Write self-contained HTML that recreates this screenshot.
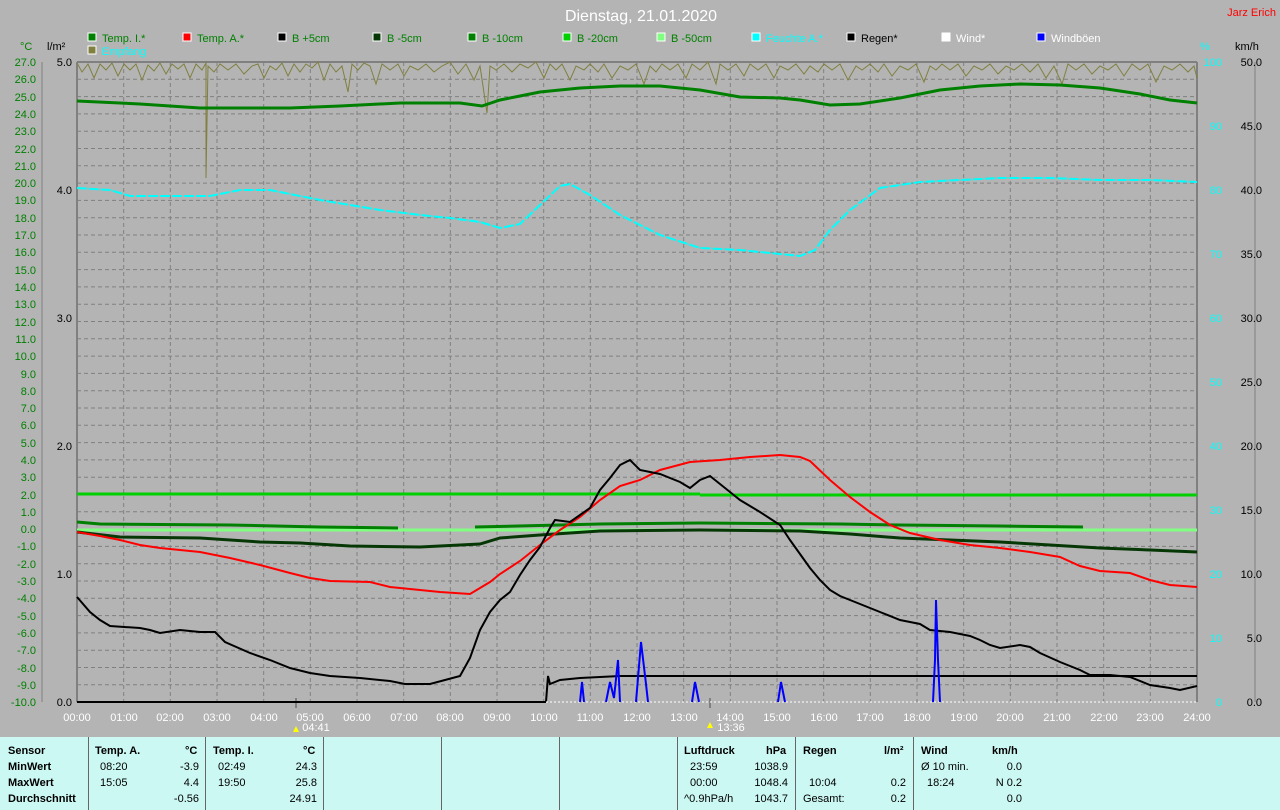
<!DOCTYPE html>
<html><head><meta charset="utf-8"><style>
html,body{margin:0;padding:0;background:#b4b4b4;}
body{width:1280px;height:810px;position:relative;overflow:hidden;font-family:"Liberation Sans",sans-serif;}
svg{position:absolute;left:0;top:0}
.tbl{position:absolute;left:0;top:737px;width:1280px;height:73px;background:#ccf8f4;font-size:11px;color:#000}
.tbl div{position:absolute;white-space:nowrap}
.b{font-weight:bold}
.v{position:absolute;top:0;width:1px;height:73px;background:#666}
</style></head><body>
<svg width="1280" height="737" viewBox="0 0 1280 737" font-family="Liberation Sans, sans-serif">
<text x="641" y="21" font-size="16" fill="#fff" text-anchor="middle">Dienstag, 21.01.2020</text>
<text x="1276" y="16" font-size="11" fill="#f00" text-anchor="end">Jarz Erich</text>
<g font-size="11">
<rect x="88" y="33" width="8" height="8" fill="#008000" stroke="#fff"/><text x="102" y="42" fill="#008000">Temp. I.*</text>
<rect x="183" y="33" width="8" height="8" fill="#f00" stroke="#fff"/><text x="197" y="42" fill="#008000">Temp. A.*</text>
<rect x="278" y="33" width="8" height="8" fill="#000" stroke="#fff"/><text x="292" y="42" fill="#008000">B +5cm</text>
<rect x="373" y="33" width="8" height="8" fill="#063806" stroke="#fff"/><text x="387" y="42" fill="#008000">B -5cm</text>
<rect x="468" y="33" width="8" height="8" fill="#008000" stroke="#fff"/><text x="482" y="42" fill="#008000">B -10cm</text>
<rect x="563" y="33" width="8" height="8" fill="#00d000" stroke="#fff"/><text x="577" y="42" fill="#008000">B -20cm</text>
<rect x="657" y="33" width="8" height="8" fill="#80ff80" stroke="#fff"/><text x="671" y="42" fill="#008000">B -50cm</text>
<rect x="752" y="33" width="8" height="8" fill="#0ff" stroke="#fff"/><text x="766" y="42" fill="#0ff">Feuchte A.*</text>
<rect x="847" y="33" width="8" height="8" fill="#000" stroke="#fff"/><text x="861" y="42" fill="#000">Regen*</text>
<rect x="942" y="33" width="8" height="8" fill="#fff" stroke="#fff"/><text x="956" y="42" fill="#fff">Wind*</text>
<rect x="1037" y="33" width="8" height="8" fill="#00f" stroke="#fff"/><text x="1051" y="42" fill="#fff">Windböen</text>
<rect x="88" y="46" width="8" height="8" fill="#808040" stroke="#fff"/><text x="102" y="55" fill="#0ff">Empfang</text>
<text x="20" y="50" fill="#008000">°C</text>
<text x="47" y="50" fill="#000">l/m²</text>
<text x="1200" y="50" fill="#0ff">%</text>
<text x="1235" y="50" fill="#000">km/h</text>
</g>
<!-- grid -->
<g stroke="#808080" stroke-dasharray="4,3" stroke-width="1">
<path d="M77 79.3H1197M77 96.6H1197M77 113.9H1197M77 131.2H1197M77 148.5H1197M77 165.8H1197M77 183.1H1197M77 200.4H1197M77 217.7H1197M77 235H1197M77 252.3H1197M77 269.6H1197M77 286.9H1197M77 304.2H1197M77 321.5H1197M77 338.8H1197M77 356.1H1197M77 373.4H1197M77 390.7H1197M77 408H1197M77 425.3H1197M77 442.6H1197M77 459.9H1197M77 477.2H1197M77 494.5H1197M77 511.8H1197M77 529.1H1197M77 546.4H1197M77 563.7H1197M77 581H1197M77 598.3H1197M77 615.6H1197M77 632.9H1197M77 650.2H1197M77 667.5H1197M77 684.8H1197"/>
<path d="M123.7 62V702M170.3 62V702M217 62V702M263.7 62V702M310.3 62V702M357 62V702M403.7 62V702M450.3 62V702M497 62V702M543.7 62V702M590.3 62V702M637 62V702M683.7 62V702M730.3 62V702M777 62V702M823.7 62V702M870.3 62V702M917 62V702M963.7 62V702M1010.3 62V702M1057 62V702M1103.7 62V702M1150.3 62V702"/>
</g>
<path d="M77 62H1197M77 62V702M1197 62V702" stroke="#808080" stroke-width="2" fill="none"/>
<path d="M42 62V702M1255 62V702" stroke="#808080" stroke-width="1" fill="none"/>
<!-- left labels -->
<g font-size="11" fill="#008000" text-anchor="end">
<text x="36" y="66">27.0</text><text x="36" y="83">26.0</text><text x="36" y="101">25.0</text><text x="36" y="118">24.0</text><text x="36" y="135">23.0</text><text x="36" y="153">22.0</text><text x="36" y="170">21.0</text><text x="36" y="187">20.0</text><text x="36" y="204">19.0</text><text x="36" y="222">18.0</text><text x="36" y="239">17.0</text><text x="36" y="256">16.0</text><text x="36" y="274">15.0</text><text x="36" y="291">14.0</text><text x="36" y="308">13.0</text><text x="36" y="326">12.0</text><text x="36" y="343">11.0</text><text x="36" y="360">10.0</text><text x="36" y="378">9.0</text><text x="36" y="395">8.0</text><text x="36" y="412">7.0</text><text x="36" y="429">6.0</text><text x="36" y="447">5.0</text><text x="36" y="464">4.0</text><text x="36" y="481">3.0</text><text x="36" y="499">2.0</text><text x="36" y="516">1.0</text><text x="36" y="533">0.0</text><text x="36" y="550">-1.0</text><text x="36" y="568">-2.0</text><text x="36" y="585">-3.0</text><text x="36" y="602">-4.0</text><text x="36" y="620">-5.0</text><text x="36" y="637">-6.0</text><text x="36" y="654">-7.0</text><text x="36" y="672">-8.0</text><text x="36" y="689">-9.0</text><text x="36" y="706">-10.0</text>
</g>
<g font-size="11" fill="#000" text-anchor="end">
<text x="72" y="66">5.0</text><text x="72" y="194">4.0</text><text x="72" y="322">3.0</text><text x="72" y="450">2.0</text><text x="72" y="578">1.0</text><text x="72" y="706">0.0</text>
</g>
<g font-size="11" fill="#0ff" text-anchor="end">
<text x="1222" y="66">100</text><text x="1222" y="130">90</text><text x="1222" y="194">80</text><text x="1222" y="258">70</text><text x="1222" y="322">60</text><text x="1222" y="386">50</text><text x="1222" y="450">40</text><text x="1222" y="514">30</text><text x="1222" y="578">20</text><text x="1222" y="642">10</text><text x="1222" y="706">0</text>
</g>
<g font-size="11" fill="#000" text-anchor="end">
<text x="1262" y="66">50.0</text><text x="1262" y="130">45.0</text><text x="1262" y="194">40.0</text><text x="1262" y="258">35.0</text><text x="1262" y="322">30.0</text><text x="1262" y="386">25.0</text><text x="1262" y="450">20.0</text><text x="1262" y="514">15.0</text><text x="1262" y="578">10.0</text><text x="1262" y="642">5.0</text><text x="1262" y="706">0.0</text>
</g>
<g font-size="11" fill="#fff" text-anchor="middle">
<text x="77" y="721">00:00</text><text x="124" y="721">01:00</text><text x="170" y="721">02:00</text><text x="217" y="721">03:00</text><text x="264" y="721">04:00</text><text x="310" y="721">05:00</text><text x="357" y="721">06:00</text><text x="404" y="721">07:00</text><text x="450" y="721">08:00</text><text x="497" y="721">09:00</text><text x="544" y="721">10:00</text><text x="590" y="721">11:00</text><text x="637" y="721">12:00</text><text x="684" y="721">13:00</text><text x="730" y="721">14:00</text><text x="777" y="721">15:00</text><text x="824" y="721">16:00</text><text x="870" y="721">17:00</text><text x="917" y="721">18:00</text><text x="964" y="721">19:00</text><text x="1010" y="721">20:00</text><text x="1057" y="721">21:00</text><text x="1104" y="721">22:00</text><text x="1150" y="721">23:00</text><text x="1197" y="721">24:00</text>
<text x="316" y="731">04:41</text><text x="731" y="731">13:36</text>
</g>
<path d="M296 698V708M710 698V708" stroke="#808080" stroke-width="2"/>
<path d="M296 726l-3 6h6z M710 722l-3 6h6z" fill="#ff0"/>
<!-- Empfang -->
<polyline fill="none" stroke="#808040" stroke-width="1" points="77,63 82,72 88,64 94,78 100,64 106,70 112,63 118,76 124,64 130,70 136,64 142,80 148,65 154,71 160,63 166,74 172,64 178,69 184,64 190,78 196,64 202,70 206,63 206,178 208,66 214,72 220,64 228,70 236,64 244,74 252,66 258,64 264,78 270,66 276,70 282,63 288,76 294,64 300,72 306,64 312,68 318,62 324,80 330,64 336,72 342,66 348,92 352,64 358,70 364,63 370,66 376,84 382,64 390,70 398,64 404,76 410,66 418,70 426,64 434,72 442,66 450,62 458,74 466,64 474,80 480,66 487,113 490,66 496,70 504,64 512,72 520,64 528,68 536,62 544,78 550,64 556,70 562,64 570,80 576,66 584,70 590,64 598,72 604,64 612,78 620,66 628,70 636,64 644,84 650,66 656,72 662,64 670,70 678,64 686,78 692,64 700,70 708,62 716,84 720,64 728,70 736,64 744,76 750,64 758,70 766,64 774,78 780,66 788,70 796,64 804,74 810,66 818,72 824,64 832,70 840,64 848,80 856,66 862,70 870,64 878,72 884,64 892,76 900,66 908,70 916,64 924,82 930,66 936,70 942,64 950,70 958,64 966,76 974,66 982,70 990,64 998,74 1006,66 1014,70 1022,64 1030,72 1038,64 1046,78 1054,66 1062,84 1068,64 1076,70 1084,64 1092,74 1100,66 1108,70 1116,64 1124,76 1132,64 1140,70 1148,64 1156,82 1164,66 1172,70 1180,64 1188,72 1194,66 1197,78"/>
<!-- Temp I -->
<polyline fill="none" stroke="#008000" stroke-width="3" points="77,101 140,104 200,108 290,108 340,106 400,103 460,103 482,106 500,100 520,96 540,92 580,88 620,86 660,86 700,90 740,97 780,98 800,100 830,105 860,104 900,98 940,90 980,86 1020,84 1060,85 1100,88 1140,94 1170,100 1197,103"/>
<!-- Feuchte -->
<polyline fill="none" stroke="#0ff" stroke-width="2" stroke-dasharray="10,2" points="77,188 110,190 130,196 210,196 240,190 270,190 320,200 380,210 420,215 450,218 480,222 500,228 520,224 540,205 560,186 570,184 590,195 620,215 660,235 700,248 740,250 780,254 800,256 815,250 830,230 850,210 880,188 920,182 1000,178 1050,178 1100,180 1150,180 1197,182"/>
<!-- B-50 -->
<path d="M77 530H1197" stroke="#80ff80" stroke-width="3"/>
<!-- B-20 -->
<path d="M77 494H700M700 495H1197" stroke="#00d000" stroke-width="3"/>
<!-- B-10 -->
<polyline fill="none" stroke="#008000" stroke-width="3" points="77,522 100,524 230,525 320,527 398,528"/>
<polyline fill="none" stroke="#008000" stroke-width="3" points="475,527 560,525 600,524 700,523 840,524 900,525 1000,526 1083,527"/>
<!-- B-5 -->
<polyline fill="none" stroke="#063806" stroke-width="3" points="77,532 120,537 200,538 260,542 300,543 350,546 420,547 480,544 500,538 540,535 600,531 700,530 800,531 850,534 900,538 950,540 1000,542 1050,545 1100,548 1150,550 1197,552"/>
<!-- Temp A -->
<polyline fill="none" stroke="#f00" stroke-width="2" points="77,532 100,536 120,540 140,545 160,548 200,552 230,558 260,565 290,573 310,578 330,581 370,582 390,587 420,590 440,592 470,594 490,582 500,574 520,561 540,545 560,530 580,517 600,500 620,486 640,480 660,470 690,462 720,460 750,457 780,455 800,457 810,461 830,480 850,497 870,512 890,525 910,533 940,540 970,545 1000,548 1030,552 1060,557 1080,566 1100,571 1130,573 1150,580 1170,585 1197,587"/>
<!-- B+5 -->
<polyline fill="none" stroke="#000" stroke-width="2" points="77,597 90,612 100,620 110,626 140,628 150,630 160,633 180,630 200,632 215,632 225,642 250,653 270,660 290,668 310,673 330,676 360,678 390,681 405,684 430,684 445,680 460,676 470,658 480,630 490,612 500,600 510,592 520,575 530,560 540,547 550,528 555,520 570,522 580,515 590,508 600,490 610,478 620,465 630,460 640,470 660,474 680,482 690,488 700,480 710,476 720,484 730,492 740,500 760,512 780,525 790,540 800,554 810,568 820,580 830,590 840,596 860,604 880,612 900,620 920,624 930,630 950,632 970,636 980,640 990,645 1000,648 1020,645 1030,647 1040,653 1060,662 1080,670 1090,675 1110,675 1130,677 1150,685 1170,688 1180,690 1197,686"/>
<!-- Rain -->
<polyline fill="none" stroke="#000" stroke-width="2" points="546,702 548,676 550,684 560,680 580,678 620,676 1197,676"/>
<path d="M77 702H546" stroke="#000" stroke-width="2"/>
<path d="M546 702H1197" stroke="#fff" stroke-width="1" stroke-dasharray="2,2"/>
<!-- Wind -->
<g fill="none" stroke="#00f" stroke-width="2">
<polyline points="580,702 582,682 584,702"/>
<polyline points="606,702 610,682 614,698 618,660 620,702"/>
<polyline points="636,702 641,642 646,684 648,702"/>
<polyline points="692,702 695,682 699,702"/>
<polyline points="778,702 781,682 785,702"/>
<polyline points="933,702 935,660 936,600 938,660 940,702"/>
</g>
</svg>
<div class="tbl">
<div class="v" style="left:88px"></div><div class="v" style="left:205px"></div><div class="v" style="left:323px"></div><div class="v" style="left:441px"></div><div class="v" style="left:559px"></div><div class="v" style="left:677px"></div><div class="v" style="left:795px"></div><div class="v" style="left:913px"></div>
<div class="b" style="left:8px;top:8px">Sensor</div><div class="b" style="left:8px;top:24px">MinWert</div><div class="b" style="left:8px;top:40px">MaxWert</div><div class="b" style="left:8px;top:56px">Durchschnitt</div>
<div class="b" style="left:95px;top:8px">Temp. A.</div><div class="b" style="left:185px;top:8px">°C</div>
<div style="left:100px;top:24px">08:20</div><div style="right:1081px;top:24px">-3.9</div>
<div style="left:100px;top:40px">15:05</div><div style="right:1081px;top:40px">4.4</div>
<div style="right:1081px;top:56px">-0.56</div>
<div class="b" style="left:213px;top:8px">Temp. I.</div><div class="b" style="left:303px;top:8px">°C</div>
<div style="left:218px;top:24px">02:49</div><div style="right:963px;top:24px">24.3</div>
<div style="left:218px;top:40px">19:50</div><div style="right:963px;top:40px">25.8</div>
<div style="right:963px;top:56px">24.91</div>
<div class="b" style="left:684px;top:8px">Luftdruck</div><div class="b" style="left:766px;top:8px">hPa</div>
<div style="left:690px;top:24px">23:59</div><div style="right:492px;top:24px">1038.9</div>
<div style="left:690px;top:40px">00:00</div><div style="right:492px;top:40px">1048.4</div>
<div style="left:684px;top:56px">^0.9hPa/h</div><div style="right:492px;top:56px">1043.7</div>
<div class="b" style="left:803px;top:8px">Regen</div><div class="b" style="left:884px;top:8px">l/m²</div>
<div style="left:809px;top:40px">10:04</div><div style="right:374px;top:40px">0.2</div>
<div style="left:803px;top:56px">Gesamt:</div><div style="right:374px;top:56px">0.2</div>
<div class="b" style="left:921px;top:8px">Wind</div><div class="b" style="left:992px;top:8px">km/h</div>
<div style="left:921px;top:24px">Ø 10 min.</div><div style="right:258px;top:24px">0.0</div>
<div style="left:927px;top:40px">18:24</div><div style="right:258px;top:40px">N 0.2</div>
<div style="right:258px;top:56px">0.0</div>
</div>
</body></html>
